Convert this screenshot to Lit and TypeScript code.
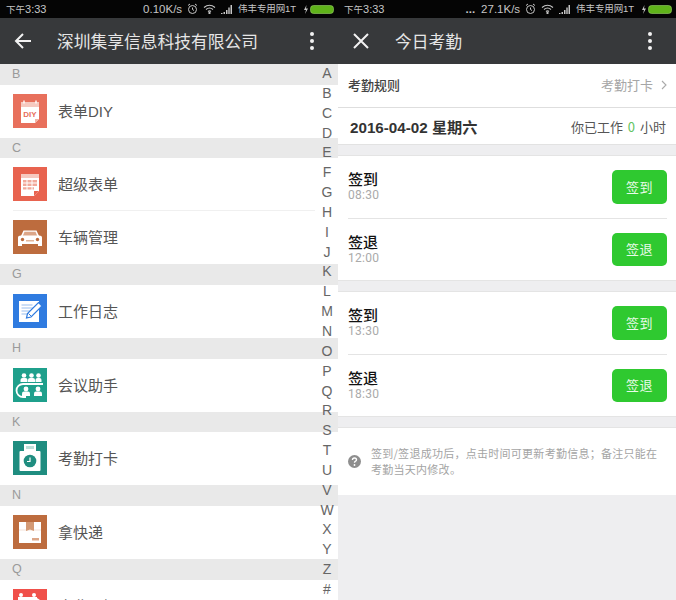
import { LitElement, html, css, svg } from "lit";
import { customElement } from "lit/decorators.js";

const icons: Record<string, any> = {
  diy: svg`<rect width="34" height="34" fill="#e8705c"/><path d="M8 8h18v17l-4 4H8z" fill="#fff"/><path d="M8 8h18v5H8z" fill="#f6c9c0"/><path d="M11 6.500v3M23 6.500v3" stroke="#fff" stroke-width="1.400"/><rect x="10" y="15" width="14" height="9" fill="#fff"/><text x="17" y="23" font-size="8" font-weight="700" text-anchor="middle" fill="#e8705c" font-family="Liberation Sans">DIY</text><path d="M22 29v-4h4z" fill="#f3b3a6"/>`,
  table: svg`<rect width="34" height="34" fill="#e8634f"/><path d="M8 7h18v17l-5 5H8z" fill="#fff"/><path d="M8 7h18v4H8z" fill="#f6c9c0"/><path d="M10 13h14v2.400H10zM10 16.600h14V19H10zM10 20.200h11v2.400H10z" fill="#f2a99b"/><path d="M14 13v10M19 13v10" stroke="#fff"/><path d="M21 29v-5h5z" fill="#e8634f"/>`,
  car: svg`<rect width="34" height="34" fill="#bd6c3e"/><path d="M10.500 10.500h13l3 6.500H7.500z" fill="#fff"/><path d="M11.500 11.800h11l2 4.700H9.500z" fill="#dca688"/><path d="M5 17.500q0-2 3-2h18q3 0 3 2V26h-4v-2H9v2H5z" fill="#fff"/><circle cx="9.500" cy="19.500" r="1.700" fill="#bd6c3e"/><circle cx="24.500" cy="19.500" r="1.700" fill="#bd6c3e"/><path d="M13 20h8v1.500h-8z" fill="#e2b69b"/>`,
  log: svg`<rect width="34" height="34" fill="#2f7be0"/><rect x="6" y="7" width="20" height="21" fill="#fff"/><path d="M8.500 11h11M8.500 14h13M8.500 17h10M8.500 20h7" stroke="#bcd3f3" stroke-width="1.500"/><path d="M13.500 24l1-4.500 11-11 3.500 3.500-11 11z" fill="#fff" stroke="#2f7be0" stroke-width="1.200"/><path d="M15.500 19.500l3.500 3.500" stroke="#2f7be0"/>`,
  meet: svg`<rect width="34" height="34" fill="#1fa08c"/><g fill="#fff"><circle cx="11" cy="7.500" r="2.300"/><path d="M7.500 14v-2q0-1.800 2-2h3q2 .2 2 2v2z"/><circle cx="18.500" cy="7.500" r="2.300"/><path d="M15 14v-2q0-1.800 2-2h3q2 .2 2 2v2z"/><circle cx="25.500" cy="7.500" r="2.300"/><path d="M22.500 14v-2q0-1.800 2-2h2q2 .2 2 2v2z"/><circle cx="13" cy="21" r="2.400"/><path d="M9 28v-2.500q0-1.800 2-2h4q2 .2 2 2V28z"/><circle cx="25" cy="21" r="2.400"/><path d="M21 28v-2.500q0-1.800 2-2h4q2 .2 2 2V28z"/></g><path d="M30 16H10a6 6 0 0 0 0 13h3" fill="none" stroke="#fff" stroke-width="1.800"/>`,
  clock: svg`<rect width="34" height="34" fill="#1f8d80"/><rect x="11" y="3" width="12" height="8" fill="#fff"/><rect x="13" y="5" width="8" height="3" fill="#bfe0da"/><rect x="6.500" y="10" width="21" height="20" rx="1" fill="#fff"/><circle cx="17" cy="20" r="6.300" fill="#1f8d80"/><path d="M17 16.500V20.500h-3" fill="none" stroke="#fff" stroke-width="1.200"/>`,
  box: svg`<rect width="34" height="34" fill="#bd6c3e"/><path d="M6 7h22v21H6z" fill="#fff"/><path d="M6 15h22" stroke="#f3e2d8"/><path d="M13 7h8v9l-4-1.500-4 1.500z" fill="#d49a75"/><path d="M19 23h7v2.500h-7z" fill="#dca688"/>`,
  red: svg`<rect width="34" height="34" fill="#f0504a"/><path d="M5 8h19v14H5z" fill="#fff"/><circle cx="8" cy="6" r="2" fill="#fff"/><circle cx="21" cy="6" r="2" fill="#fff"/><path d="M24 9l6 4-6 4z" fill="#fff"/>`,
};

const groups = [
  { l: "B", items: [["diy", "表单DIY"]] },
  { l: "C", items: [["table", "超级表单"], ["car", "车辆管理"]] },
  { l: "G", items: [["log", "工作日志"]] },
  { l: "H", items: [["meet", "会议助手"]] },
  { l: "K", items: [["clock", "考勤打卡"]] },
  { l: "N", items: [["box", "拿快递"]] },
  { l: "Q", items: [["red", "企业通知"]] },
];
const letters = "ABCDEFGHIJKLMNOPQRSTUVWXYZ#".split("");

@customElement("app-status")
class AppStatus extends LitElement {
  static properties = { speed: {}, dots: { type: Boolean } };
  speed = "";
  dots = false;
  static styles = css`
    :host { display: flex; flex: none; align-items: center; height: 18px; background: #050505; color: #c6c6c6; padding: 0 4px 0 6px;
      font: 11.500px/18px "Liberation Sans", "Noto Sans CJK SC", sans-serif; white-space: nowrap; }
    .time { flex: 1; font-size: 11px; }
    .time span { font-size: 9.500px; }
    .speed { margin-right: 5px; }
    .ico { display: block; margin-right: 5px; }
    .sig { display: block; margin-right: 6px; }
    .carrier { font-size: 9.500px; margin-right: 7px; letter-spacing: -.1px; }
    .dots { font-weight: 700; margin-right: 6px; }
  `;
  render() {
    return html`<span class="time"><span>下午</span>3:33</span>
      ${this.dots ? html`<span class="dots">...</span>` : ""}
      <span class="speed">${this.speed}</span>
      <svg class="ico" width="11" height="12" viewBox="0 0 11 12" fill="none" stroke="#c6c6c6"><circle cx="5.500" cy="6.500" r="4"/><path d="M5.500 4.500v2l1.500 1M1 2.500l2-1.500M10 2.500L8 1"/></svg>
      <svg class="ico" width="13" height="10" viewBox="0 0 13 10" fill="none" stroke="#c6c6c6" stroke-width="1.100"><path d="M1 3.500q5.500-4.500 11 0M3 5.500q3.500-3 7 0M5 7.500q1.500-1.300 3 0"/><circle cx="6.500" cy="9" r=".6" fill="#c6c6c6"/></svg>
      <svg class="sig" width="11" height="9" viewBox="0 0 11 9" fill="#c6c6c6"><path d="M0 8h1.500v1H0zM2.500 7H4v2H2.500zM5 5h1.500v4H5zM7.300 2.500h1.400V9H7.300zM9.500 0H11v9H9.500z"/></svg>
      <span class="carrier">伟丰专用网1T</span>
      <svg width="31" height="9" viewBox="0 0 31 9" style="display:block"><path d="M3.500 0L1 5h2L2 9l3-5.500H3z" fill="#c6c6c6"/><rect x="7.500" y=".5" width="23" height="8" rx="3" fill="#5fb31a" stroke="#9ad36a" stroke-width=".6"/></svg>`;
  }
}

@customElement("app-bar")
class AppBar extends LitElement {
  static properties = { title: {}, close: { type: Boolean } };
  title = "";
  close = false;
  static styles = css`
    :host { display: flex; flex: none; align-items: center; height: 46px; background: #37393b; color: #e6e6e6; }
    .lead { width: 45px; padding-left: 14px; box-sizing: border-box; display: flex; }
    .t { flex: 1; padding-left: 12px; font: 16.750px "Noto Sans CJK SC", sans-serif; white-space: nowrap; }
    .more { display: block; margin-right: 24px; }
  `;
  render() {
    return html`<div class="lead">
        ${this.close
          ? html`<svg width="18" height="18" viewBox="0 0 18 18" stroke="#f2f2f2" stroke-width="2" fill="none"><path d="M2 2l14 14M16 2L2 16"/></svg>`
          : html`<svg width="18" height="18" viewBox="0 0 18 18" stroke="#f2f2f2" stroke-width="2" fill="none"><path d="M17 9H2M9 2L2 9l7 7"/></svg>`}
      </div>
      <div class="t">${this.title}</div>
      <svg class="more" width="4" height="18" viewBox="0 0 4 18" fill="#f2f2f2"><circle cx="2" cy="2" r="2"/><circle cx="2" cy="9" r="2"/><circle cx="2" cy="16" r="2"/></svg>`;
  }
}

@customElement("app-root")
class AppRoot extends LitElement {
  static styles = css`
    :host { display: grid; grid-template-columns: 338px 338px; width: 676px; height: 600px; overflow: hidden;
      font-family: "Noto Sans CJK SC", sans-serif; background: #fff; }
    .pane { position: relative; height: 600px; overflow: hidden; display: flex; flex-direction: column; }

    .head { height: 20.670px; background: #e9e9e9; padding-left: 12px; color: #9a9a9a;
      font: 12.500px/21px "Liberation Sans", sans-serif; flex: none; }
    .row { height: 53px; display: flex; align-items: center; flex: none; padding-left: 13px; gap: 11px;
      color: #555; font-size: 15px; background: #fff; position: relative; }
    .row span { font-family: "Liberation Sans", "Noto Sans CJK SC", sans-serif; margin-top: -2px; }
    .row.sep::after { content: ""; position: absolute; left: 13px; right: 23px; bottom: 0; height: 1px; background: #f0f0f0; }
    .row svg { display: block; flex: none; margin-top: -1px; }
    .index { position: absolute; right: 0; top: 64px; width: 22px; display: flex; flex-direction: column; align-items: center;
      color: #666; font: 14px/19.850px "Liberation Sans", sans-serif; }

    .right { background: #eeeef0; }
    .rule { height: 44px; box-sizing: border-box; background: #fff; display: flex; align-items: center; justify-content: space-between; padding: 0 9px 2px 10px;
      border-bottom: 1px solid #dedede; flex: none; }
    .rule b { font-weight: 500; font-size: 13px; color: #444; }
    .rule span { display: flex; align-items: center; gap: 8px; color: #a6a6a6; font-size: 13px; }
    .date { height: 37px; box-sizing: border-box; background: #fff; display: flex; align-items: center; justify-content: space-between;
      padding: 0 10px 0 12px; flex: none; border-bottom: 1px solid #e2e2e2; }
    .date b { font: 700 15.200px "Liberation Sans", "Noto Sans CJK SC", sans-serif; color: #333; }
    .date span { font-size: 13px; color: #555; }
    .date i { font-style: normal; color: #62c462; margin: 0 2px; }
    .sec { margin-top: 10px; background: #fff; flex: none; border-top: 1px solid #e4e4e4; border-bottom: 1px solid #e4e4e4; padding: 0 9px 0 10px; }
    .item { height: 62px; display: flex; align-items: center; justify-content: space-between; box-sizing: border-box; }
    .item + .item { border-top: 1px solid #e4e4e4; }
    .lab { display: flex; flex-direction: column; margin-top: -2px; }
    .lab b { font-weight: 500; font-size: 15px; line-height: 18px; color: #111; }
    .lab small { font: 12px/14px "Roboto", sans-serif; color: #aaa; letter-spacing: .3px; }
    .btn { width: 55px; height: 33.500px; box-sizing: border-box; padding-bottom: 2px; background: #2fc930; border-radius: 5px; color: #e8fbe8; font-size: 13px;
      display: flex; align-items: center; justify-content: center; letter-spacing: .5px; }
    .note { margin-top: 10px; height: 68px; background: #fff; border-top: 1px solid #e4e4e4; box-sizing: border-box; flex: none;
      display: flex; align-items: center; gap: 10px; padding: 0 10px 0 10px; color: #a4a4a4; font-size: 11px; line-height: 15.500px; letter-spacing: .27px; }
    .note svg { flex: none; display: block; }
  `;

  sec(a: [string, string, string], b: [string, string, string]) {
    const it = (x: [string, string, string]) => html`<div class="item">
      <div class="lab"><b>${x[0]}</b><small>${x[1]}</small></div>
      <div class="btn">${x[2]}</div>
    </div>`;
    return html`<div class="sec">${it(a)}${it(b)}</div>`;
  }

  render() {
    return html`
      <div class="pane">
        <app-status speed="0.10K/s"></app-status>
        <app-bar title="深圳集享信息科技有限公司"></app-bar>
        ${groups.map(g => html`<div class="head">${g.l}</div>
          ${g.items.map((it, i) => html`<div class="row ${i < g.items.length - 1 ? "sep" : ""}">
            <svg width="34" height="34" viewBox="0 0 34 34">${icons[it[0]]}</svg><span>${it[1]}</span>
          </div>`)}`)}
        <div class="index">${letters.map(l => html`<span>${l}</span>`)}</div>
      </div>
      <div class="pane right">
        <app-status speed="27.1K/s" dots></app-status>
        <app-bar title="今日考勤" close></app-bar>
        <div class="rule"><b>考勤规则</b><span>考勤打卡
          <svg width="6" height="10" viewBox="0 0 6 10" fill="none" stroke="#aaa" stroke-width="1.100"><path d="M1 1l4 4-4 4"/></svg></span></div>
        <div class="date"><b>2016-04-02 星期六</b><span>你已工作<i> 0 </i>小时</span></div>
        ${this.sec(["签到", "08:30", "签到"], ["签退", "12:00", "签退"])}
        ${this.sec(["签到", "13:30", "签到"], ["签退", "18:30", "签退"])}
        <div class="note">
          <svg width="13" height="13" viewBox="0 0 13 13"><circle cx="6.500" cy="6.500" r="6.500" fill="#8e8e8e"/><path d="M4.500 5q0-2 2-2t2 1.800q0 1-1.200 1.500-.8.400-.8 1.400" fill="none" stroke="#fff" stroke-width="1.400"/><circle cx="6.500" cy="10" r=".9" fill="#fff"/></svg>
          <div>签到/签退成功后，点击时间可更新考勤信息；备注只能在<br>考勤当天内修改。</div>
        </div>
      </div>`;
  }
}
